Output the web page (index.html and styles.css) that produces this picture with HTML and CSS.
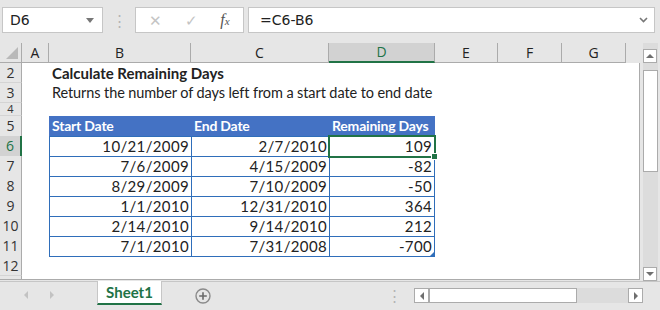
FILE: index.html
```html
<!DOCTYPE html>
<html lang="en">
<head>
    <meta charset="UTF-8">
    <title>Calculate Remaining Days</title>
    <link rel="stylesheet" href="styles.css">
</head>
<body>
    <div id="toolbar">
        <div class="name-box">
            <span>D6</span>
            <span class="drop"></span>
        </div>
        <div class="grip">⋮</div>
        <div class="fx-box">
            <span class="fx-btn cancel">✕</span>
            <span class="fx-btn ok">✓</span>
            <span class="fx-btn fx"><i>f</i><small>x</small></span>
        </div>
        <div class="formula-box">
            <span>=C6-B6</span>
            <svg class="chev" width="9" height="6" viewBox="0 0 9 6"><path d="M1 1 L4.5 4.5 L8 1" fill="none" stroke="#777" stroke-width="1.6"/></svg>
        </div>
    </div>

    <div id="sheet">
        <div class="grid">
            <div class="row heads">
                <div class="corner"><span class="tri"></span></div>
                <div class="ch">A</div>
                <div class="ch">B</div>
                <div class="ch">C</div>
                <div class="ch active">D</div>
                <div class="ch">E</div>
                <div class="ch">F</div>
                <div class="ch">G</div>
            </div>
            <div class="body">
                <div class="row r20">
                    <div class="rh">2</div><div class="c"></div>
                    <div class="c title">Calculate Remaining Days</div>
                </div>
                <div class="row r20">
                    <div class="rh">3</div><div class="c"></div>
                    <div class="c sub">Returns the number of days left from a start date to end date</div>
                </div>
                <div class="row r13">
                    <div class="rh">4</div>
                </div>
                <div class="row r20">
                    <div class="rh">5</div><div class="c"></div>
                    <div class="c th">Start Date</div>
                    <div class="c th">End Date</div>
                    <div class="c th last">Remaining Days</div>
                </div>
                <div class="row r20">
                    <div class="rh active">6</div><div class="c"></div>
                    <div class="c td">10/21/2009</div>
                    <div class="c td">2/7/2010</div>
                    <div class="c td last sel">109<span class="handle"></span></div>
                </div>
                <div class="row r20">
                    <div class="rh">7</div><div class="c"></div>
                    <div class="c td">7/6/2009</div>
                    <div class="c td">4/15/2009</div>
                    <div class="c td last">-82</div>
                </div>
                <div class="row r20">
                    <div class="rh">8</div><div class="c"></div>
                    <div class="c td">8/29/2009</div>
                    <div class="c td">7/10/2009</div>
                    <div class="c td last">-50</div>
                </div>
                <div class="row r20">
                    <div class="rh">9</div><div class="c"></div>
                    <div class="c td">1/1/2010</div>
                    <div class="c td">12/31/2010</div>
                    <div class="c td last">364</div>
                </div>
                <div class="row r20">
                    <div class="rh">10</div><div class="c"></div>
                    <div class="c td">2/14/2010</div>
                    <div class="c td">9/14/2010</div>
                    <div class="c td last">212</div>
                </div>
                <div class="row r20">
                    <div class="rh">11</div><div class="c"></div>
                    <div class="c td">7/1/2010</div>
                    <div class="c td">7/31/2008</div>
                    <div class="c td last">-700<span class="resize"></span></div>
                </div>
                <div class="row r20">
                    <div class="rh">12</div>
                </div>
                <div class="row rest">
                    <div class="rh"></div>
                </div>
            </div>
        </div>
        <div class="vscroll">
            <div class="sbtn up"><span></span></div>
            <div class="vthumb"></div>
            <div class="vtrack"></div>
            <div class="sbtn down"><span></span></div>
        </div>
    </div>

    <div id="tabbar">
        <div class="nav">
            <span class="nav-l"></span>
            <span class="nav-r"></span>
        </div>
        <div class="tab">Sheet1</div>
        <div class="add">
            <svg width="16" height="16" viewBox="0 0 16 16"><circle cx="8" cy="8" r="7" fill="none" stroke="#8a8a8a" stroke-width="1.4"/><path d="M8 4.2 V11.8 M4.2 8 H11.8" stroke="#6a6a6a" stroke-width="1.6"/></svg>
        </div>
        <div class="hgrip">⋮</div>
        <div class="hscroll">
            <div class="sbtn left"><span></span></div>
            <div class="hthumb"></div>
            <div class="htrack"></div>
            <div class="sbtn right"><span></span></div>
        </div>
    </div>
</body>
</html>
```

FILE: styles.css
```css
body {
    margin: 0;
    width: 660px;
    height: 310px;
    overflow: hidden;
    background: #e6e6e6;
    font-family: "Open Sans", sans-serif;
    color: #222;
}

/* formula bar */
#toolbar {
    display: flex;
    align-items: center;
    height: 43px;
    padding: 0 5px 0 2px;
    box-sizing: border-box;
}
.name-box {
    width: 101px;
    height: 26px;
    margin-top: -3px;
    box-sizing: border-box;
    background: #fff;
    border: 1px solid #c6c6c6;
    display: flex;
    align-items: center;
    justify-content: space-between;
    padding: 0 8px 0 7px;
    font-family: "DejaVu Sans", sans-serif;
    font-size: 14px;
    color: #222;
}
.drop {
    width: 0;
    height: 0;
    border-left: 4px solid transparent;
    border-right: 4px solid transparent;
    border-top: 5px solid #777;
}
.grip {
    width: 32px;
    text-align: center;
    color: #b4b4b4;
    font-size: 15px;
    margin-top: -3px;
}
.fx-box {
    width: 109px;
    height: 26px;
    margin-top: -3px;
    box-sizing: border-box;
    background: #fff;
    border: 1px solid #c6c6c6;
    display: flex;
    align-items: center;
    justify-content: space-around;
    padding: 0 2px;
}
.fx-btn {
    font-size: 15px;
    color: #c4c4c4;
}
.fx-btn.fx {
    color: #555;
    font-family: "Liberation Serif", serif;
    font-size: 16px;
}
.fx-btn.fx small {
    font-size: 11px;
    font-style: italic;
}
.formula-box {
    flex: 1;
    margin-left: 4px;
    height: 26px;
    margin-top: -3px;
    box-sizing: border-box;
    background: #fff;
    border: 1px solid #c6c6c6;
    display: flex;
    align-items: center;
    justify-content: space-between;
    padding: 0 6px 0 11px;
    font-family: "DejaVu Sans", sans-serif;
    font-size: 14px;
    color: #222;
}

/* sheet */
#sheet {
    display: flex;
    height: 238px;
}
.grid {
    width: 640px;
}
.row {
    display: grid;
    grid-template-columns: 22px 27px 142px 138px 106px 63px 64px 64px;
}
.heads {
    height: 20px;
    font-size: 14px;
}
.corner {
    position: relative;
    border-right: 1px solid #ababab;
    border-bottom: 1px solid #ababab;
}
.tri {
    position: absolute;
    right: 3px;
    bottom: 3px;
    width: 0;
    height: 0;
    border-left: 12px solid transparent;
    border-bottom: 12px solid #b9b9b9;
}
.ch {
    text-align: center;
    line-height: 19px;
    border-right: 1px solid #ababab;
    border-bottom: 1px solid #ababab;
}
.ch.active {
    background: #d2d2d2;
    color: #217346;
    border-bottom: 2px solid #217346;
    line-height: 18px;
}
.body {
    background: #fff;
    height: 217px;
    border-right: 1px solid #ababab;
    border-bottom: 1px solid #ababab;
    box-sizing: border-box;
    overflow: hidden;
}
.r20 { height: 20px; }
.r13 { height: 13px; }
.rest { height: 40px; }
.rh {
    background: #e6e6e6;
    border-right: 1px solid #ababab;
    border-bottom: 1px solid #d4d4d4;
    text-align: center;
    font-size: 14px;
    line-height: 19px;
    color: #333;
    overflow: hidden;
}
.r13 .rh {
    font-size: 11px;
    line-height: 12px;
    overflow: visible;
}
.rh.active {
    background: #d2d2d2;
    color: #217346;
    border-right: 2px solid #217346;
}
.c {
    position: relative;
    white-space: nowrap;
    font-family: "Lato", sans-serif;
    font-size: 15px;
    line-height: 20px;
    padding: 0 3px;
    box-sizing: border-box;
}
.title {
    font-weight: bold;
}
.sub {
    font-size: 14.5px;
    letter-spacing: -0.1px;
}
.th {
    background: #4472c4;
    color: #fff;
    font-weight: bold;
    font-size: 14px;
    letter-spacing: -0.2px;
    border-bottom: 1px solid #2f6eba;
}
.td {
    text-align: right;
    letter-spacing: 0.35px;
    border-left: 1px solid #2f6eba;
    border-bottom: 1px solid #2f6eba;
    line-height: 19px;
    padding: 1px 2px 0 3px;
}
.td.last {
    border-right: 1px solid #2f6eba;
}
.sel {
    outline: 2px solid #217346;
    outline-offset: -1px;
    z-index: 1;
}
.handle {
    position: absolute;
    right: -4px;
    bottom: -4px;
    width: 5px;
    height: 5px;
    background: #217346;
    border: 1px solid #fff;
}
.resize {
    position: absolute;
    right: 0;
    bottom: 0;
    width: 0;
    height: 0;
    border-left: 4px solid transparent;
    border-bottom: 4px solid #2f6eba;
}

/* scrollbars */
.vscroll {
    width: 15px;
    margin-left: 3px;
    display: flex;
    flex-direction: column;
    padding-top: 6px;
    background: #dcdcdc;
}
.sbtn {
    width: 14px;
    height: 14px;
    background: #fff;
    border: 1px solid #ababab;
    box-sizing: border-box;
    display: flex;
    align-items: center;
    justify-content: center;
    flex-shrink: 0;
}
.sbtn span {
    width: 0;
    height: 0;
}
.up span {
    border-left: 4px solid transparent;
    border-right: 4px solid transparent;
    border-bottom: 4px solid #6f6f6f;
}
.down span {
    border-left: 4px solid transparent;
    border-right: 4px solid transparent;
    border-top: 4px solid #6f6f6f;
}
.left span {
    border-top: 4px solid transparent;
    border-bottom: 4px solid transparent;
    border-right: 4px solid #6f6f6f;
}
.right span {
    border-top: 4px solid transparent;
    border-bottom: 4px solid transparent;
    border-left: 4px solid #6f6f6f;
}
.vthumb {
    margin-top: 7px;
    height: 102px;
    background: #fff;
    border: 1px solid #ababab;
    box-sizing: border-box;
}
.vtrack {
    flex: 1;
}

/* sheet tabs */
#tabbar {
    display: flex;
    align-items: flex-start;
    height: 29px;
    border-top: 1px solid #c6c6c6;
    box-sizing: border-box;
}
.nav {
    width: 97px;
    display: flex;
    gap: 22px;
    padding: 9px 0 0 24px;
    box-sizing: border-box;
}
.nav span {
    width: 0;
    height: 0;
    border-top: 4px solid transparent;
    border-bottom: 4px solid transparent;
}
.nav-l { border-right: 4px solid #c2c2c2; }
.nav-r { border-left: 4px solid #c2c2c2; }
.tab {
    width: 65px;
    height: 24px;
    margin-top: -1px;
    background: #fff;
    border-left: 1px solid #c6c6c6;
    border-right: 1px solid #c6c6c6;
    border-bottom: 2px solid #217346;
    box-sizing: border-box;
    text-align: center;
    font-family: "Lato", sans-serif;
    font-weight: bold;
    font-size: 15px;
    line-height: 22px;
    color: #217346;
}
.add {
    margin: 5px 0 0 33px;
    height: 16px;
}
.hgrip {
    margin-left: 176px;
    color: #b4b4b4;
    font-size: 15px;
    line-height: 26px;
}
.hscroll {
    display: flex;
    margin: 6px 0 0 12px;
    width: 229px;
    height: 15px;
    background: #dcdcdc;
}
.hscroll .sbtn {
    width: 15px;
    height: 15px;
}
.hthumb {
    width: 148px;
    background: #fff;
    border: 1px solid #ababab;
    box-sizing: border-box;
}
.htrack {
    flex: 1;
}
```
